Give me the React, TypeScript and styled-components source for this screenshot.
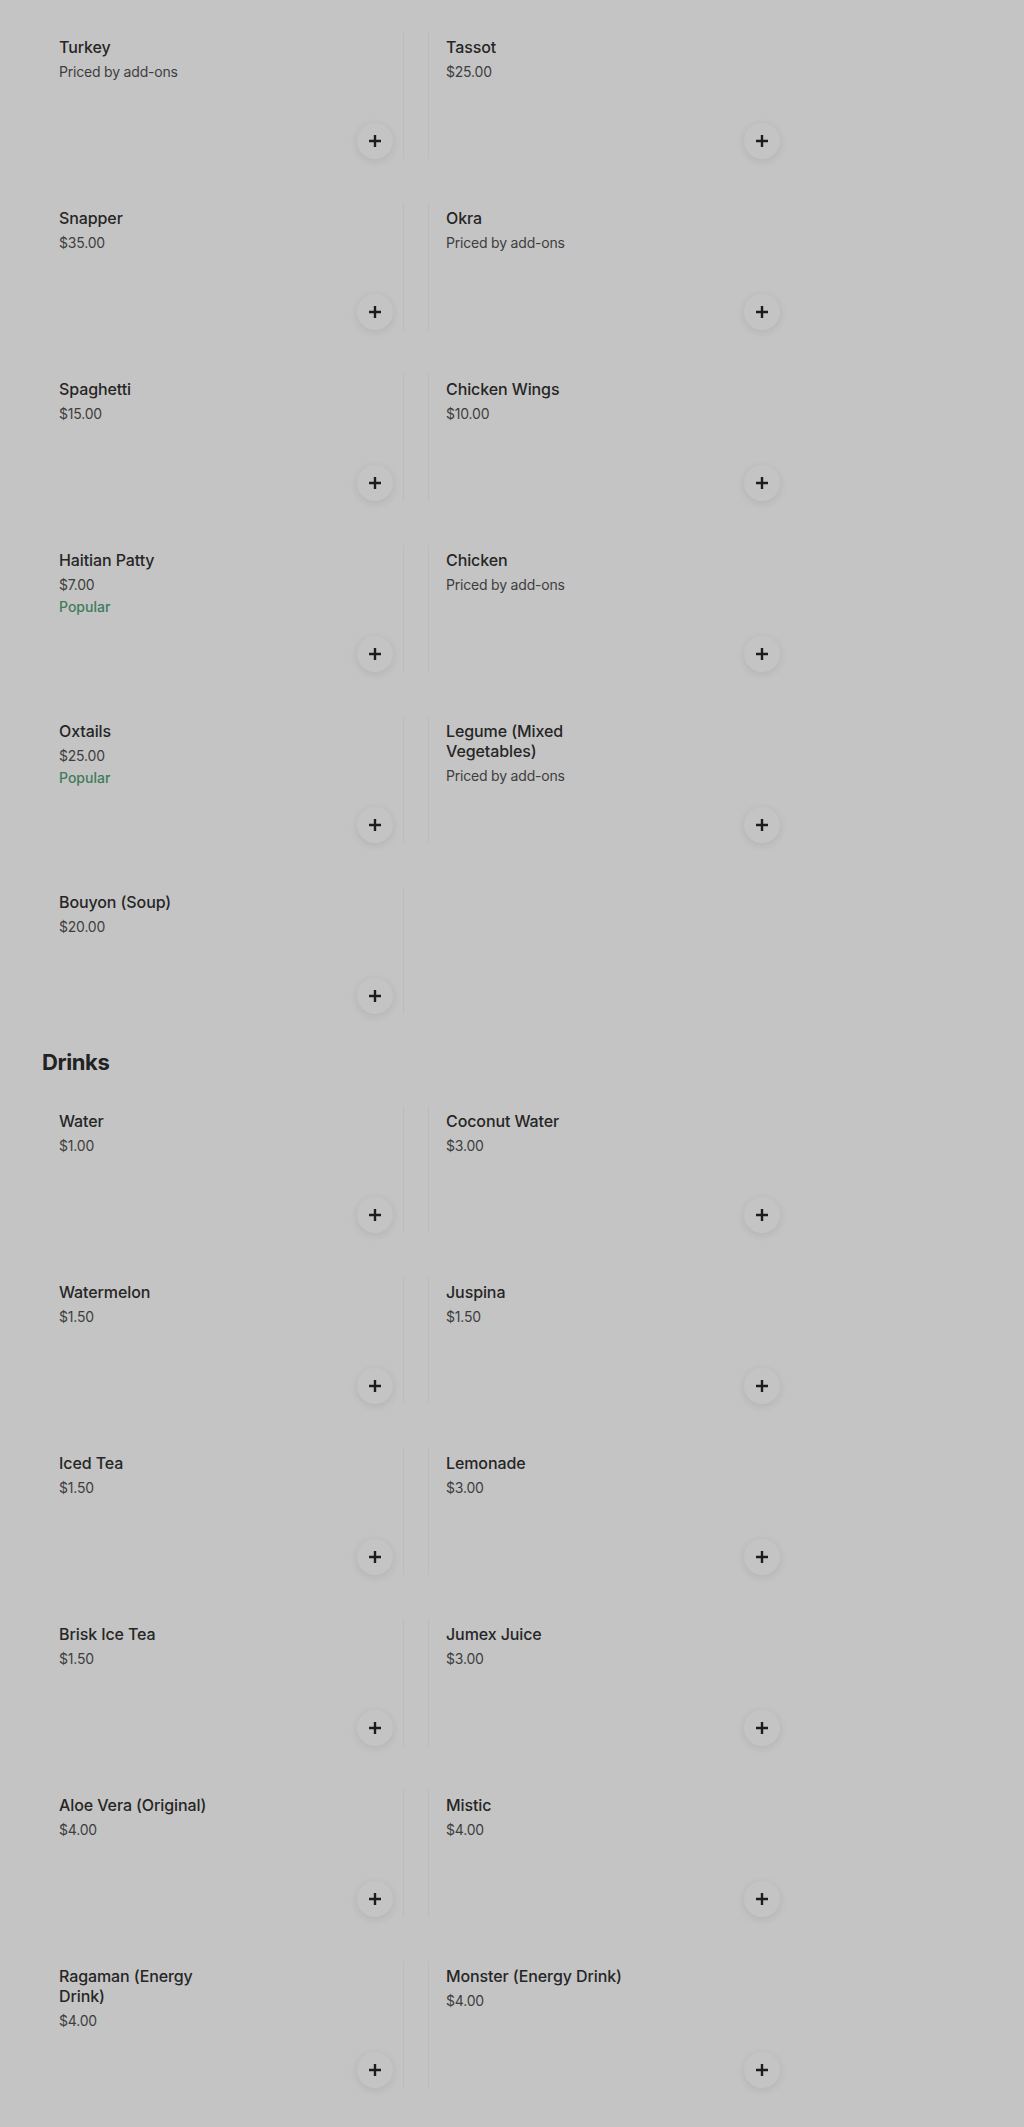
import React from "react";
import styled, { createGlobalStyle } from "styled-components";

const Global = createGlobalStyle`
  html, body {
    margin: 0;
    padding: 0;
    background: #c4c4c4;
  }
  body {
    font-family: "Inter", "Roboto", "Liberation Sans", sans-serif;
    color: #262626;
    -webkit-font-smoothing: antialiased;
  }
`;

type Item = { name: string; price: string; popular?: boolean };

const food: Item[] = [
  { name: "Turkey", price: "Priced by add-ons" },
  { name: "Tassot", price: "$25.00" },
  { name: "Snapper", price: "$35.00" },
  { name: "Okra", price: "Priced by add-ons" },
  { name: "Spaghetti", price: "$15.00" },
  { name: "Chicken Wings", price: "$10.00" },
  { name: "Haitian Patty", price: "$7.00", popular: true },
  { name: "Chicken", price: "Priced by add-ons" },
  { name: "Oxtails", price: "$25.00", popular: true },
  { name: "Legume (Mixed Vegetables)", price: "Priced by add-ons" },
  { name: "Bouyon (Soup)", price: "$20.00" },
];

const drinks: Item[] = [
  { name: "Water", price: "$1.00" },
  { name: "Coconut Water", price: "$3.00" },
  { name: "Watermelon", price: "$1.50" },
  { name: "Juspina", price: "$1.50" },
  { name: "Iced Tea", price: "$1.50" },
  { name: "Lemonade", price: "$3.00" },
  { name: "Brisk Ice Tea", price: "$1.50" },
  { name: "Jumex Juice", price: "$3.00" },
  { name: "Aloe Vera (Original)", price: "$4.00" },
  { name: "Mistic", price: "$4.00" },
  { name: "Ragaman (Energy Drink)", price: "$4.00" },
  { name: "Monster (Energy Drink)", price: "$4.00" },
];

const Page = styled.main`
  padding: 32px 0 38px 42px;
  display: flex;
  flex-direction: column;
`;

const SectionTitle = styled.h2`
  margin: 32px 0 28px;
  font-size: 22px;
  line-height: 32px;
  font-weight: 700;
  letter-spacing: -0.4px;
  color: #222;
`;

const Grid = styled.ul`
  list-style: none;
  margin: 0;
  padding: 0;
  display: grid;
  grid-template-columns: 362px 362px;
  column-gap: 24px;
  row-gap: 44px;
`;

const Card = styled.li<{ $side: "left" | "right" }>`
  box-sizing: border-box;
  height: 127px;
  padding: 5px 10px 0 17px;
  display: flex;
  flex-direction: column;
  border-right: ${(p) => (p.$side === "left" ? "1px solid #bcbcbc" : "none")};
  border-left: ${(p) => (p.$side === "right" ? "1px solid #bcbcbc" : "none")};
`;

const Name = styled.div`
  font-size: 16px;
  line-height: 20px;
  font-weight: 500;
  color: #262626;
  max-width: 179px;
  letter-spacing: -0.1px;
`;

const Price = styled.div`
  margin-top: 5px;
  font-size: 14px;
  line-height: 20px;
  font-weight: 400;
  color: #3e3e3e;
  letter-spacing: -0.2px;
`;

const Badge = styled.div`
  margin-top: 2px;
  font-size: 14px;
  line-height: 20px;
  font-weight: 500;
  color: #3f7b5a;
`;

const AddButton = styled.button`
  margin-top: auto;
  align-self: flex-end;
  width: 36px;
  height: 36px;
  padding: 0;
  border: none;
  border-radius: 50%;
  background: #c4c4c4;
  box-shadow: 0 2px 8px rgba(0, 0, 0, 0.09);
  display: flex;
  align-items: center;
  justify-content: center;
  color: #1c1c1c;
  cursor: pointer;
`;

const PlusIcon = () => (
  <svg width="14" height="14" viewBox="0 0 14 14" aria-hidden="true">
    <path d="M7 1v12M1 7h12" stroke="currentColor" strokeWidth="2.4" fill="none" />
  </svg>
);

const MenuGrid = ({ items }: { items: Item[] }) => (
  <Grid>
    {items.map((it, i) => (
      <Card key={it.name} $side={i % 2 === 0 ? "left" : "right"}>
        <Name>{it.name}</Name>
        <Price>{it.price}</Price>
        {it.popular && <Badge>Popular</Badge>}
        <AddButton aria-label={`Add ${it.name}`}>
          <PlusIcon />
        </AddButton>
      </Card>
    ))}
  </Grid>
);

export default function App() {
  return (
    <>
      <Global />
      <Page>
        <MenuGrid items={food} />
        <SectionTitle>Drinks</SectionTitle>
        <MenuGrid items={drinks} />
      </Page>
    </>
  );
}
